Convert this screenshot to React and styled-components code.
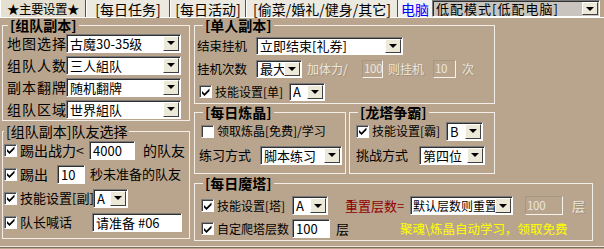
import React from "react";
import styled, { createGlobalStyle } from "styled-components";

const GlobalStyle = createGlobalStyle`
  * { box-sizing: border-box; }
  body {
    margin: 0;
    background: #b9a58d;
  }
`;

const Screen = styled.div`
  width: 604px;
  height: 249px;
  overflow: hidden;
  background: #b9a58d;
  font-family: "Noto Sans CJK SC", "Noto Sans", sans-serif;
  font-size: 12px;
  color: #000;
`;

const TabStrip = styled.div`
  display: flex;
  height: 17px;
`;

const Tab = styled.div`
  width: ${(p) => p.$w}px;
  height: 17px;
  display: flex;
  align-items: center;
  justify-content: center;
  font-size: ${(p) => p.$size || 14}px;
  letter-spacing: ${(p) => p.$ls || 0}px;
  line-height: 16px;
  white-space: nowrap;
  background: ${(p) => (p.$active ? "#e6e0d2" : "#ece9e0")};
  border-left: 1px solid #fff;
  border-right: 1px solid #505050;
`;

const LinkCell = styled.div`
  width: 34px;
  display: flex;
  align-items: center;
  justify-content: center;
  background: #f2f2f2;
  color: #0000ff;
  font-size: 14px;
  line-height: 16px;
`;

const Panel = styled.div`
  display: flex;
  gap: 4px;
  height: 230px;
  padding: 0 2px;
  border-top: 1px solid #fff;
  border-bottom: 1px solid #efe9e0;
  box-shadow: 0 1px 0 #7d6d5a;
`;

const Column = styled.div`
  width: ${(p) => p.$w}px;
  display: flex;
  flex-direction: column;
  align-items: flex-start;
`;

const PairRow = styled.div`
  display: flex;
  gap: 3px;
  margin-top: 1px;
`;

const Group = styled.fieldset`
  margin: ${(p) => p.$mt || 0}px 0 0 0;
  min-width: 0;
  width: ${(p) => p.$w}px;
  height: ${(p) => p.$h}px;
  padding: ${(p) => p.$pt || 0}px ${(p) => p.$px}px 0 ${(p) => p.$px}px;
  border: 1px solid #f3eee7;
`;

const Legend = styled.legend`
  padding: 0 2px;
  margin-left: ${(p) => p.$ml || 0}px;
  font-size: 14px;
  line-height: 14px;
  font-weight: ${(p) => (p.$bold ? 700 : 400)};
  white-space: nowrap;
`;

const Row = styled.div`
  display: flex;
  align-items: center;
  height: ${(p) => p.$h}px;
  white-space: nowrap;
`;

const Txt = styled.span`
  display: inline-block;
  width: ${(p) => (p.$w ? `${p.$w}px` : "auto")};
  margin-left: ${(p) => p.$ml || 0}px;
  font-size: ${(p) => p.$size || 12}px;
  letter-spacing: ${(p) => p.$ls || 0}px;
  line-height: 16px;
  flex-shrink: 0;
`;

const Dim = styled(Txt)`
  color: #ebe5dc;
  text-shadow: 1px 1px 0 #a39079;
`;

const Red = styled(Txt)`
  color: #900000;
`;

const Yellow = styled(Txt)`
  color: #ffff00;
`;

const ComboBox = styled.div`
  display: flex;
  width: ${(p) => p.$w}px;
  height: ${(p) => p.$h}px;
  margin-left: ${(p) => p.$ml || 0}px;
  flex-shrink: 0;
  padding: 1px;
  background: ${(p) => p.$bg || "#fff"};
  border: 1px solid;
  border-color: #7a7a7a #fff #fff #7a7a7a;
  box-shadow: inset 1px 1px 0 #303030;
`;

const ComboText = styled.div`
  flex: 1;
  min-width: 0;
  padding-left: ${(p) => p.$pl ?? 2}px;
  display: flex;
  align-items: center;
  font-size: ${(p) => p.$size || 13}px;
  letter-spacing: ${(p) => p.$ls || 0}px;
  line-height: 15px;
  white-space: nowrap;
`;

const ComboBtn = styled.div`
  width: 16px;
  flex-shrink: 0;
  display: flex;
  align-items: center;
  justify-content: center;
  background: #ece9d8;
  border: 1px solid;
  border-color: #fff #404040 #404040 #fff;
`;

const Arrow = styled.div`
  width: 0;
  height: 0;
  border-left: 4px solid transparent;
  border-right: 4px solid transparent;
  border-top: 4px solid #000;
`;

function Combo({ w, h = 19, ml, bg, size, pl, ls, children }) {
  return (
    <ComboBox $w={w} $h={h} $ml={ml} $bg={bg}>
      <ComboText $size={size} $pl={pl} $ls={ls}>{children}</ComboText>
      <ComboBtn>
        <Arrow />
      </ComboBtn>
    </ComboBox>
  );
}

const TextBox = styled.div`
  width: ${(p) => p.$w}px;
  height: ${(p) => p.$h || 19}px;
  margin-left: ${(p) => p.$ml || 0}px;
  flex-shrink: 0;
  display: flex;
  align-items: center;
  padding-left: 3px;
  font-size: 13px;
  line-height: 15px;
  background: #fff;
  border: 1px solid;
  border-color: #7a7a7a #fff #fff #7a7a7a;
  box-shadow: inset 1px 1px 0 #303030;
`;

const OffBox = styled(TextBox)`
  padding-left: 1px;
  font-size: 11.5px;
  letter-spacing: -0.3px;
  background: transparent;
  color: #ece7df;
  border-color: #a8977f #f6f2ec #f6f2ec #a8977f;
  box-shadow: none;
`;

const CheckBox = styled.div`
  width: 13px;
  height: 13px;
  margin-left: ${(p) => p.$ml || 0}px;
  margin-right: 3px;
  flex-shrink: 0;
  display: flex;
  align-items: center;
  justify-content: center;
  background: #fff;
  border: 1px solid;
  border-color: #808080 #fff #fff #808080;
  box-shadow: inset 1px 1px 0 #404040;
`;

function Check({ checked = true, ml }) {
  return (
    <CheckBox $ml={ml}>
      {checked && (
        <svg width="8" height="8" viewBox="0 0 8 8">
          <polygon points="0,3 2.5,5.5 7.5,0.5 7.5,3 2.5,8 0,5.5" fill="#000" />
        </svg>
      )}
    </CheckBox>
  );
}

export default function App() {
  return (
    <Screen>
      <GlobalStyle />
      <TabStrip>
        <Tab $w={86} $size={12.5} $ls={-0.5} $active>★主要设置★</Tab>
        <Tab $w={84}>[每日任务]</Tab>
        <Tab $w={76}>[每日活动]</Tab>
        <Tab $w={152}>[偷菜/婚礼/健身/其它]</Tab>
        <LinkCell>电脑</LinkCell>
        <Combo w={168} h={17} bg="#c9c5be" size={13} ls={1}>低配模式[低配电脑]</Combo>
      </TabStrip>

      <Panel>
        <Column $w={188}>
          <Group $w={188} $h={103} $px={4}>
            <Legend $bold $ml={1}>[组队副本]</Legend>
            <Row $h={22}>
              <Txt $w={59} $size={14} $ls={1}>地图选择</Txt>
              <Combo w={115}>古魔30-35级</Combo>
            </Row>
            <Row $h={22}>
              <Txt $w={59} $size={14} $ls={1}>组队人数</Txt>
              <Combo w={115}>三人組队</Combo>
            </Row>
            <Row $h={22}>
              <Txt $w={59} $size={14} $ls={1}>副本翻牌</Txt>
              <Combo w={115}>随机翻牌</Combo>
            </Row>
            <Row $h={22}>
              <Txt $w={59} $size={14} $ls={1}>组队区域</Txt>
              <Combo w={115}>世界組队</Combo>
            </Row>
          </Group>

          <Group $w={188} $h={115} $px={1} $mt={3}>
            <Legend>[组队副本]队友选择</Legend>
            <Row $h={24}>
              <Check ml={0} />
              <Txt $w={69} $size={14}>踢出战力&lt;</Txt>
              <TextBox $w={46}>4000</TextBox>
              <Txt $ml={8} $size={14}>的队友</Txt>
            </Row>
            <Row $h={24}>
              <Check />
              <Txt $w={37} $size={14}>踢出</Txt>
              <TextBox $w={28}>10</TextBox>
              <Txt $ml={5} $size={13}>秒未准备的队友</Txt>
            </Row>
            <Row $h={24}>
              <Check />
              <Txt $w={73} $size={13}>技能设置[副]</Txt>
              <Combo w={35}>A</Combo>
            </Row>
            <Row $h={24}>
              <Check />
              <Txt $w={72} $size={13}>队长喊话</Txt>
              <TextBox $w={90}>请准备 #06</TextBox>
            </Row>
          </Group>
        </Column>

        <Column $w={399}>
          <Group $w={301} $h={86} $px={2} $pt={2}>
            <Legend $bold $ml={6}>[单人副本]</Legend>
            <Row $h={23}>
              <Txt $w={59} $size={12.5}>结束挂机</Txt>
              <Combo w={147} h={18}>立即结束[礼券]</Combo>
            </Row>
            <Row $h={23}>
              <Txt $w={59} $size={12.5}>挂机次数</Txt>
              <Combo w={46} h={18}>最大</Combo>
              <Dim $ml={5} $w={55}>加体力/</Dim>
              <OffBox $w={21} $h={18}>100</OffBox>
              <Dim $ml={5} $w={45}>则挂机</Dim>
              <OffBox $w={23} $h={18}>10</OffBox>
              <Dim $ml={6}>次</Dim>
            </Row>
            <Row $h={23}>
              <Check ml={2} />
              <Txt $w={74}>技能设置[单]</Txt>
              <Combo w={36} h={18}>A</Combo>
            </Row>
          </Group>

          <PairRow>
            <Group $w={152} $h={69} $px={2}>
              <Legend $bold $ml={6}>[每日炼晶]</Legend>
              <Row $h={24}>
                <Check checked={false} ml={4} />
                <Txt>领取炼晶[免费]/学习</Txt>
              </Row>
              <Row $h={24}>
                <Txt $w={61} $ml={2} $size={13}>练习方式</Txt>
                <Combo w={82}>脚本练习</Combo>
              </Row>
            </Group>

            <Group $w={146} $h={69} $px={2}>
              <Legend $bold $ml={6}>[龙塔争霸]</Legend>
              <Row $h={24}>
                <Check ml={4} />
                <Txt $w={74}>技能设置[霸]</Txt>
                <Combo w={37}>B</Combo>
              </Row>
              <Row $h={24}>
                <Txt $w={63} $ml={4} $size={13}>挑战方式</Txt>
                <Combo w={66}>第四位</Combo>
              </Row>
            </Group>
          </PairRow>

          <Group $w={399} $h={65} $px={2} $pt={4} $mt={2}>
            <Legend $bold $ml={6}>[每日魔塔]</Legend>
            <Row $h={23}>
              <Check ml={4} />
              <Txt $w={75}>技能设置[塔]</Txt>
              <Combo w={36}>A</Combo>
              <Red $ml={17} $w={65} $size={13}>重置层数=</Red>
              <Combo w={103} size={12} pl={1}>默认层数则重置</Combo>
              <OffBox $w={38} $ml={12}>100</OffBox>
              <Dim $ml={9} $size={13}>层</Dim>
            </Row>
            <Row $h={23}>
              <Check ml={4} />
              <Txt $w={75}>自定爬塔层数</Txt>
              <TextBox $w={38}>100</TextBox>
              <Txt $ml={6} $w={64} $size={13}>层</Txt>
              <Yellow $size={12.5}>聚魂\炼晶自动学习，领取免费</Yellow>
            </Row>
          </Group>
        </Column>
      </Panel>
    </Screen>
  );
}
